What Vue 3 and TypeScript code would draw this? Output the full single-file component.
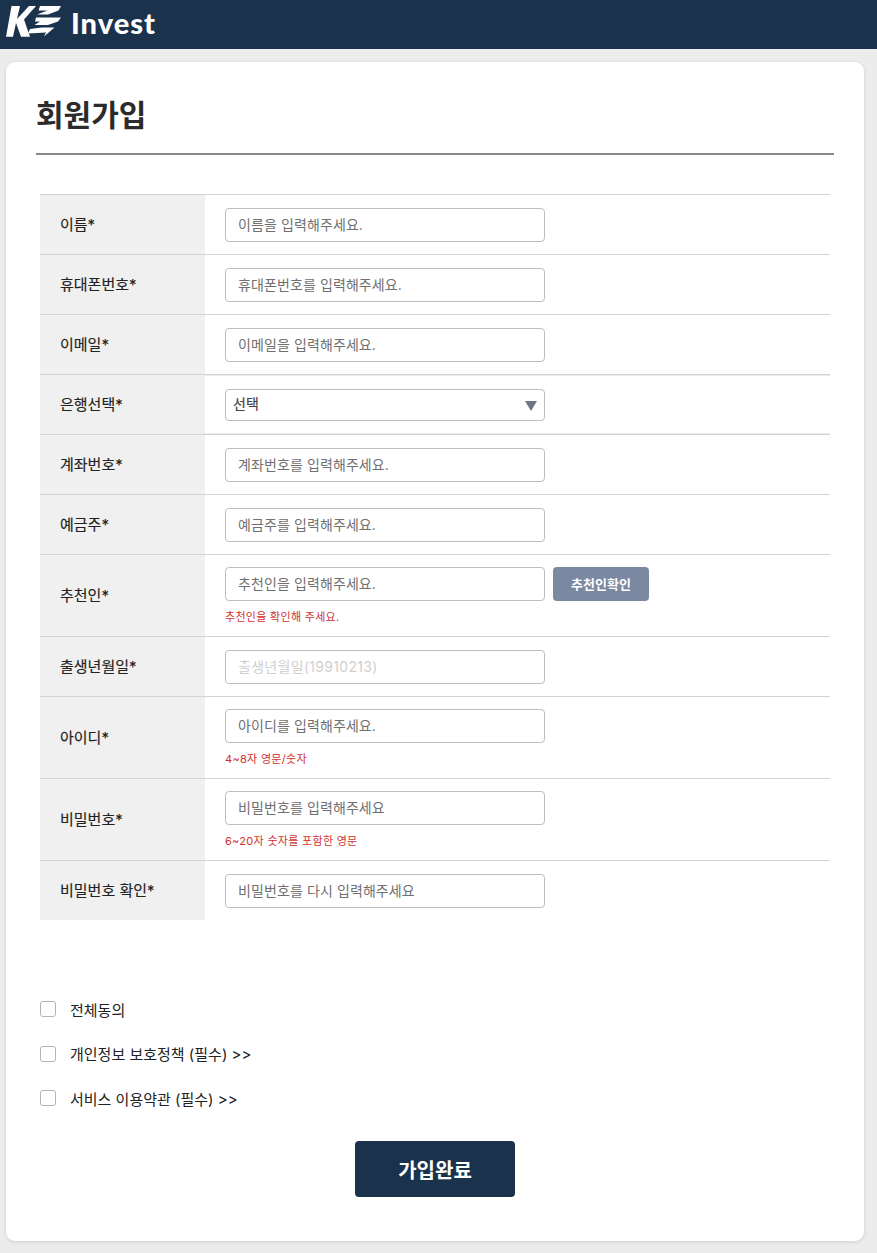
<script setup lang="ts">
interface Row {
  label: string
  placeholder?: string
  hint?: string
  kind?: 'select' | 'button' | 'muted'
}
const rows: Row[] = [
  { label: '이름*', placeholder: '이름을 입력해주세요.' },
  { label: '휴대폰번호*', placeholder: '휴대폰번호를 입력해주세요.' },
  { label: '이메일*', placeholder: '이메일을 입력해주세요.' },
  { label: '은행선택*', kind: 'select' },
  { label: '계좌번호*', placeholder: '계좌번호를 입력해주세요.' },
  { label: '예금주*', placeholder: '예금주를 입력해주세요.' },
  { label: '추천인*', placeholder: '추천인을 입력해주세요.', kind: 'button', hint: '추천인을 확인해 주세요.' },
  { label: '출생년월일*', placeholder: '출생년월일(19910213)', kind: 'muted' },
  { label: '아이디*', placeholder: '아이디를 입력해주세요.', hint: '4~8자 영문/숫자' },
  { label: '비밀번호*', placeholder: '비밀번호를 입력해주세요', hint: '6~20자 숫자를 포함한 영문' },
  { label: '비밀번호 확인*', placeholder: '비밀번호를 다시 입력해주세요' },
]
const agreements: string[] = ['전체동의', '개인정보 보호정책 (필수) >>', '서비스 이용약관 (필수) >>']
</script>

<template>
  <div class="page">
    <header class="topbar">
      <svg class="logo" width="58" height="49" viewBox="0 0 58 49" aria-hidden="true">
        <g transform="translate(-6 0)">
          <path d="M11.500 6H20L17 19L29 6H36L24 19.500L30 36.700H21L16 23L13 36.700H6Z" fill="#fff" />
          <path d="M40 6H61L58.500 10.500L48 14.500H37L47.500 10.500H38.500Z" fill="#fff" />
          <path d="M36 17.500H61L58 21.500L48 25H34.500L40 21.500H35Z" fill="#fff" />
          <path d="M30 29L42 27.500H54.500L44 36.500L46 32.500L28 33.500Z" fill="#fff" />
        </g>
      </svg>
      <span class="brand">Invest</span>
    </header>

    <main class="card">
      <h1 class="title">회원가입</h1>

      <div class="form">
        <div v-for="row in rows" :key="row.label" class="row">
          <div class="label">{{ row.label }}</div>
          <div class="field" :class="{ 'has-hint': row.hint, 'select-field': row.kind === 'select' }">
            <div v-if="row.kind === 'select'" class="select-wrap">
              <select class="select">
                <option>선택</option>
              </select>
              <span class="arrow"></span>
            </div>
            <div v-else class="line">
              <input class="input" :class="{ muted: row.kind === 'muted' }" type="text" :placeholder="row.placeholder" />
              <button v-if="row.kind === 'button'" class="check" type="button">추천인확인</button>
            </div>
            <p v-if="row.hint" class="hint">{{ row.hint }}</p>
          </div>
        </div>
      </div>

      <div class="agreements">
        <label v-for="item in agreements" :key="item" class="agree">
          <span class="box"></span>
          <span>{{ item }}</span>
        </label>
      </div>

      <div class="actions">
        <button class="submit" type="button">가입완료</button>
      </div>
    </main>
  </div>
</template>

<style>
html,
body {
  margin: 0;
  background: #ececec;
}
</style>

<style scoped>
.page {
  min-height: 1253px;
  background: #ececec;
  font-family: Inter, "Noto Sans CJK KR", sans-serif;
  color: #222;
}
.topbar {
  height: 49px;
  background: #1b324d;
  display: flex;
  align-items: center;
  padding-left: 6px;
  gap: 7px;
  box-sizing: border-box;
}
.logo {
  flex: none;
}
.brand {
  color: #fff;
  font-family: Lato, sans-serif;
  font-size: 29px;
  font-weight: 900;
  line-height: 1;
  letter-spacing: 1px;
  margin-bottom: 5px;
}
.card {
  margin: 13px 13px 0 6px;
  height: 1179px;
  background: #fff;
  border-radius: 9px;
  box-shadow: 0 1px 4px rgba(0, 0, 0, 0.12);
  box-sizing: border-box;
  padding: 0 30px;
}
.title {
  margin: 0;
  height: 93px;
  box-sizing: border-box;
  padding-top: 33px;
  font-size: 30px;
  line-height: 40px;
  font-weight: 700;
  color: #2b2b2b;
  border-bottom: 2px solid #888;
}
.form {
  margin: 39px 4px 0;
}
.row {
  display: flex;
  border-top: 1px solid #d2d2d6;
}
.label {
  width: 165px;
  flex: none;
  background: #f0f0f0;
  padding: 0 0 2px 20px;
  box-sizing: border-box;
  display: flex;
  align-items: center;
  font-size: 15px;
  font-weight: 400;
  -webkit-text-stroke: 0.15px #222;
  color: #222;
}
.field {
  flex: 1;
  padding: 13px 20px 12px;
  height: 59px;
  box-sizing: border-box;
}
.field.has-hint {
  height: 81px;
  padding: 12px 20px 11px;
}
.field.select-field {
  box-shadow: inset 0 1px 0 #ececf0, inset 0 -1px 0 #ececf0;
}
.line {
  display: flex;
  gap: 8px;
}
.input {
  width: 320px;
  height: 34px;
  box-sizing: border-box;
  border: 1px solid #bdbdbd;
  border-radius: 4px;
  padding: 0 12px 2px;
  font: inherit;
  font-size: 14px;
  letter-spacing: 0.1px;
  background: #fff;
  outline: none;
}
.input::placeholder {
  color: #707070;
  opacity: 1;
}
.input.muted {
  letter-spacing: 0.3px;
}
.input.muted::placeholder {
  color: #cfcfcf;
}
.select-wrap {
  position: relative;
  width: 320px;
  margin-top: 1px;
}
.select {
  display: block;
  width: 100%;
  height: 32px;
  box-sizing: border-box;
  appearance: none;
  border: 1px solid #bdbdbd;
  border-radius: 4px;
  background: #fff;
  padding: 0 7px 4px;
  font: inherit;
  font-size: 14px;
  font-weight: 400;
  -webkit-text-stroke: 0.2px #444;
  color: #444;
}
.arrow {
  position: absolute;
  right: 8px;
  top: 12px;
  width: 0;
  height: 0;
  border-left: 6px solid transparent;
  border-right: 6px solid transparent;
  border-top: 10px solid #6f7785;
}
.check {
  width: 96px;
  height: 34px;
  border: none;
  border-radius: 4px;
  background: #7a88a1;
  color: #fff;
  font: inherit;
  font-size: 13px;
  font-weight: 700;
  padding: 0 0 2px;
}
.hint {
  margin: 8px 0 0;
  font-size: 11px;
  line-height: 16px;
  letter-spacing: 0.3px;
  color: #d0312d;
}
.agreements {
  margin-top: 78px;
  padding-left: 4px;
  display: flex;
  flex-direction: column;
}
.agree {
  display: flex;
  align-items: center;
  height: 22px;
  margin-bottom: 22.5px;
  font-size: 15px;
  color: #222;
}
.box {
  width: 16px;
  height: 16px;
  box-sizing: border-box;
  border: 1px solid #b5b5b5;
  border-radius: 3px;
  margin-right: 14px;
  background: #fff;
}
.actions {
  display: flex;
  justify-content: center;
  margin-top: 9.5px;
}
.submit {
  width: 160px;
  height: 56px;
  background: #1b324d;
  color: #fff;
  border: none;
  border-radius: 4px;
  font: inherit;
  font-size: 20px;
  font-weight: 700;
}
</style>
